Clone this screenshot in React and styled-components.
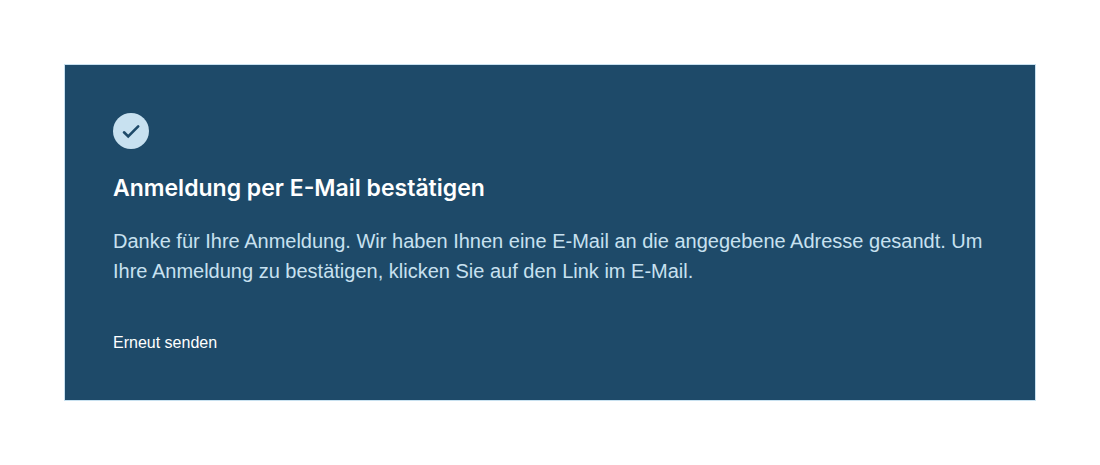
import React from "react";
import styled, { createGlobalStyle } from "styled-components";

const Global = createGlobalStyle`
  *, *::before, *::after { box-sizing: border-box; }
  body { margin: 0; background: #fff; font-family: "Liberation Sans", Arial, sans-serif; }
`;

const Page = styled.main`
  padding: 64px;
`;

const Card = styled.section`
  display: flex;
  flex-direction: column;
  align-items: flex-start;
  padding: 48px;
  border: 1px solid #c8e1f0;
  background: #1e4a69;
`;

const CheckIcon = styled.svg`
  display: block;
  width: 36px;
  height: 36px;
  margin-bottom: 20px;
`;

const Title = styled.h1`
  margin: 0;
  color: #fff;
  font-family: Inter, sans-serif;
  font-size: 23px;
  font-weight: 600;
  line-height: 38px;
`;

const Message = styled.p`
  margin: 19px 0 48px;
  color: #c8e1f0;
  font-size: 20px;
  line-height: 30px;
`;

const ResendButton = styled.button`
  margin: 0;
  padding: 0;
  border: 0;
  background: none;
  color: #fff;
  font: inherit;
  font-size: 16px;
  line-height: 18px;
  cursor: pointer;
`;

export default function App() {
  return (
    <>
      <Global />
      <Page>
        <Card>
          <CheckIcon viewBox="0 0 36 36" aria-hidden="true">
            <circle cx="18" cy="18" r="18" fill="#c8e1f0" />
            <path
              d="M11 19.3l4.2 4.1L25.2 13.3"
              fill="none"
              stroke="#1e4a69"
              strokeWidth="2.6"
              strokeLinecap="round"
            />
          </CheckIcon>
          <Title>Anmeldung per E-Mail bestätigen</Title>
          <Message>
            Danke für Ihre Anmeldung. Wir haben Ihnen eine E-Mail an die angegebene Adresse gesandt.
            Um Ihre Anmeldung zu bestätigen, klicken Sie auf den Link im E-Mail.
          </Message>
          <ResendButton type="button">Erneut senden</ResendButton>
        </Card>
      </Page>
    </>
  );
}
